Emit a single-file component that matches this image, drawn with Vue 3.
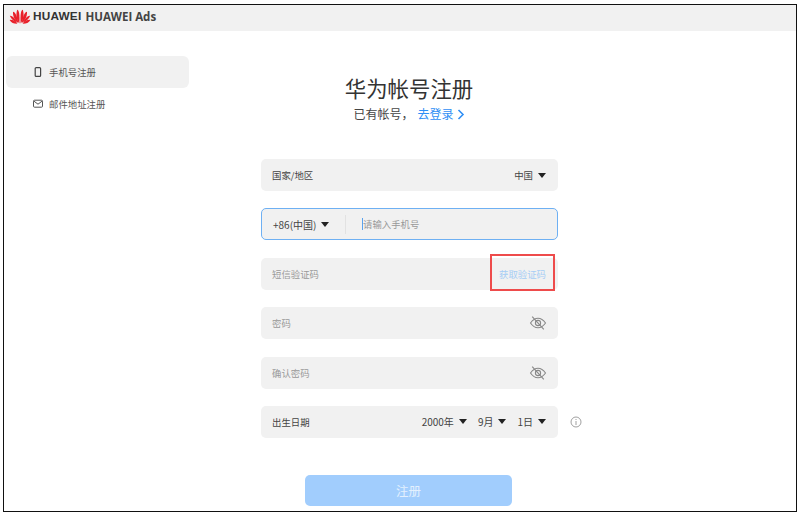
<script setup>
const sideItems = [
  { label: '手机号注册', icon: 'phone', active: true },
  { label: '邮件地址注册', icon: 'mail', active: false }
]
const dates = ['2000年', '9月', '1日']
</script>

<template>
  <div class="page">
    <div class="frame">
      <header class="top">
        <svg class="logo" width="22" height="17" viewBox="0 0 22 16">
          <g fill="#e8202a">
            <path d="M10.4 15 C7.5 11 6.6 7 8.2 1.2 C10 1.6 10.8 5 10.4 15Z"/>
            <path d="M11.6 15 C14.5 11 15.4 7 13.8 1.2 C12 1.6 11.2 5 11.6 15Z"/>
            <path d="M9.4 14.6 C5.8 11.6 3.8 8.4 4 3.2 C6.2 3.4 8 7 9.4 14.6Z"/>
            <path d="M12.6 14.6 C16.2 11.6 18.2 8.4 18 3.2 C15.8 3.4 14 7 12.6 14.6Z"/>
            <path d="M8.6 14.6 C5 12.8 2 10.6 0.8 7.2 C3.2 6.8 6 9.6 8.6 14.6Z"/>
            <path d="M13.4 14.6 C17 12.8 20 10.6 21.2 7.2 C18.8 6.8 16 9.6 13.4 14.6Z"/>
            <path d="M8.4 15.2 C5 15.4 2.4 14.2 0.6 11.4 C3.2 10.8 6 12.6 8.4 15.2Z"/>
            <path d="M13.6 15.2 C17 15.4 19.6 14.2 21.4 11.4 C18.8 10.8 16 12.6 13.6 15.2Z"/>
          </g>
        </svg>
        <span class="brand">HUAWEI</span>
        <span class="product">HUAWEI Ads</span>
      </header>

      <div class="body">
        <aside class="side">
          <div v-for="item in sideItems" :key="item.label" class="side-item" :class="{ active: item.active }">
            <svg v-if="item.icon === 'phone'" class="side-icon" width="12" height="12" viewBox="0 0 12 12" fill="none" stroke="#444" stroke-width="1.2">
              <rect x="3.2" y="1.6" width="5.4" height="8.8" rx="1"/>
            </svg>
            <svg v-else class="side-icon" width="12" height="12" viewBox="0 0 12 12" fill="none" stroke="#555" stroke-width="1">
              <rect x="1.5" y="2.2" width="9" height="7" rx="1"/>
              <path d="M2 3.2 L6 6.2 L10 3.2"/>
            </svg>
            <span>{{ item.label }}</span>
          </div>
        </aside>

        <main class="main">
          <h1 class="title">华为帐号注册</h1>
          <p class="sub">
            已有帐号，<a class="login">去登录<svg class="chev" width="8" height="11" viewBox="0 0 8 11" fill="none" stroke="#2f8ff5" stroke-width="1.6"><path d="M1.5 1 L6 5.5 L1.5 10"/></svg></a>
          </p>

          <form class="form" @submit.prevent>
            <div class="field">
              <span class="label">国家/地区</span>
              <span class="select">中国<i class="caret"></i></span>
            </div>

            <div class="field focus">
              <span class="select code">+86(中国)<i class="caret"></i></span>
              <span class="divider"></span>
              <span class="cursor"></span>
              <span class="hint">请输入手机号</span>
            </div>

            <div class="field">
              <span class="hint">短信验证码</span>
              <span class="get">获取验证码</span>
              <span class="mark"></span>
            </div>

            <div class="field" v-for="t in ['密码', '确认密码']" :key="t">
              <span class="hint">{{ t }}</span>
              <svg class="eye" width="18" height="16" viewBox="0 0 18 16" fill="none" stroke="#888" stroke-width="1.1">
                <path d="M1.5 8 C4 4.4 6.4 3.2 9 3.2 C11.6 3.2 14 4.4 16.5 8 C14 11.6 11.6 12.8 9 12.8 C6.4 12.8 4 11.6 1.5 8Z"/>
                <circle cx="9" cy="8" r="2.6"/>
                <path d="M3.2 1.6 L14.8 14.4"/>
              </svg>
            </div>

            <div class="field date">
              <span class="label">出生日期</span>
              <span class="dates">
                <span v-for="d in dates" :key="d" class="select">{{ d }}<i class="caret"></i></span>
              </span>
              <svg class="info" width="12" height="12" viewBox="0 0 12 12" fill="none" stroke="#888" stroke-width="0.8">
                <circle cx="6" cy="6" r="5"/>
                <path d="M6 5 V9 M6 3 V4"/>
              </svg>
            </div>
          </form>

          <button class="submit" type="button">注册</button>
        </main>
      </div>
    </div>
  </div>
</template>

<style>
html, body { margin: 0; background: #fff; }
</style>

<style scoped>
.page {
  width: 801px;
  height: 522px;
  padding: 4px 4px 0 3px;
  box-sizing: border-box;
  font-family: "Noto Sans CJK SC", "Noto Sans", sans-serif;
  overflow: hidden;
}
.frame {
  height: 508px;
  border: 1px solid #111;
  box-sizing: border-box;
  background: #fff;
  display: flex;
  flex-direction: column;
}
.top {
  height: 26px;
  box-sizing: border-box;
  background: #f1f1f1;
  display: flex;
  align-items: center;
  padding-left: 5px;
  padding-bottom: 4px;
  flex: none;
}
.logo { flex: none; }
.brand {
  font: 700 11.8px "Liberation Sans", sans-serif;
  color: #333;
  margin-left: 2px;
  letter-spacing: 0.2px;
}
.product {
  font: 700 11.5px "Open Sans", sans-serif;
  color: #444;
  margin-left: 4px;
}
.body { flex: 1; display: flex; min-height: 0; }
.side { width: 183px; flex: none; padding: 25px 0 0 2px; }
.side-item {
  height: 32px;
  display: flex;
  align-items: center;
  padding-left: 26px;
  font-size: 9.4px;
  color: #555;
  border-radius: 6px;
}
.side-item.active { background: #f1f1f1; }
.side-icon { margin-right: 5px; flex: none; }
.main {
  width: 374px;
  margin-left: 33px;
  display: flex;
  flex-direction: column;
  align-items: center;
  padding-top: 42px;
  box-sizing: border-box;
}
.title {
  margin: 0;
  font-size: 21.4px;
  font-weight: 400;
  line-height: 30px;
  color: #333;
}
.sub {
  margin: 1px 0 0;
  font-size: 12px;
  line-height: 20px;
  color: #444;
}
.login { color: #2f8ff5; margin-left: 4px; }
.chev { margin-left: 3px; vertical-align: -1px; }
.form {
  margin-top: 35px;
  width: 297px;
  display: flex;
  flex-direction: column;
  gap: 17.4px;
  align-self: flex-start;
  margin-left: 39px;
}
.field {
  flex: none;
  height: 32px;
  box-sizing: border-box;
  background: #f1f1f1;
  border-radius: 5px;
  display: flex;
  align-items: center;
  justify-content: space-between;
  padding: 0 12px 0 11px;
  font-size: 9.4px;
  position: relative;
}
.field.focus {
  border: 1px solid #6eb0f3;
  justify-content: flex-start;
}
.label { color: #444; }
.hint { color: #999; }
.select { color: #444; display: inline-flex; align-items: center; }
.code { font-size: 10px; width: 71px; flex: none; }
.caret {
  width: 0;
  height: 0;
  border-left: 4.5px solid transparent;
  border-right: 4.5px solid transparent;
  border-top: 5px solid #222;
  margin-left: 5px;
}
.divider { width: 1px; height: 19px; background: #e2e2e2; margin-left: 1px; flex: none; }
.cursor { width: 1px; height: 12px; background: #5aa2ee; margin-left: 16px; flex: none; }
.get { color: #a6cdf5; }
.mark {
  position: absolute;
  right: 3px;
  top: -4px;
  width: 65px;
  height: 37px;
  box-sizing: border-box;
  border: 2px solid #ee4b4b;
}
.eye { flex: none; margin-right: -1px; }
.dates { display: flex; gap: 11px; font-size: 10px; }
.info { position: absolute; left: 309px; top: 10px; }
.submit {
  margin-top: 37px;
  width: 207px;
  height: 31px;
  border: none;
  border-radius: 5px;
  background: #a1cdfd;
  color: #e3f0fe;
  font-family: inherit;
  font-size: 12.5px;
  margin-left: -1px;
}
</style>
